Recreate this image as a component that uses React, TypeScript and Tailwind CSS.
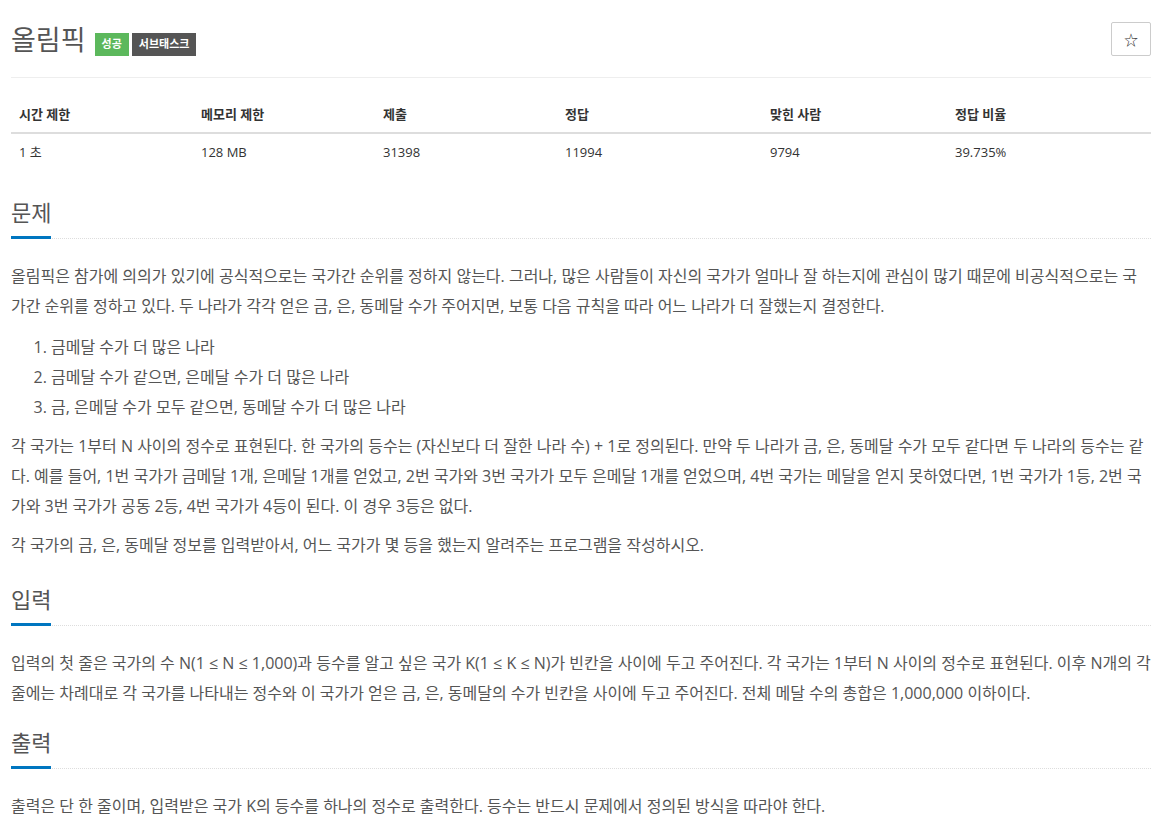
import React from 'react'

const FONT = { fontFamily: '"Open Sans", "Noto Sans CJK KR", sans-serif' }

const STATS = [
  { label: '시간 제한', value: '1 초', w: 'w-[182px]' },
  { label: '메모리 제한', value: '128 MB', w: 'w-[182px]' },
  { label: '제출', value: '31398', w: 'w-[182px]' },
  { label: '정답', value: '11994', w: 'w-[205px]' },
  { label: '맞힌 사람', value: '9794', w: 'w-[185px]' },
  { label: '정답 비율', value: '39.735%', w: 'w-[204px]' },
]

function Headline({ children, mt = 'mt-[23px]' }: { children: React.ReactNode; mt?: string }) {
  return (
    <div className={`${mt} border-b border-dotted border-[#ddd] relative`}>
      <h2 className="text-[22px] leading-[32px] text-[#555] pb-[10px]">{children}</h2>
      <span className="absolute left-0 bottom-[-1px] w-[40px] h-[3px] bg-[#0076c0]" />
    </div>
  )
}

function Text({ children }: { children: React.ReactNode }) {
  return <p className="mb-[9px]">{children}</p>
}

export default function App() {
  return (
    <div className="bg-white min-h-screen text-[#555]" style={FONT}>
      <div className="ml-[11px] w-[1140px]">
        {/* title */}
        <div className="flex items-center justify-between pt-[22px] pb-[19px] border-b border-[#eee]">
          <div className="flex items-center">
            <h1 className="text-[27px] leading-[36px] text-[#555]">올림픽</h1>
            <span className="ml-[9px] mt-[9px] h-[23px] px-[7px] flex items-center bg-[#5cb85c] text-white text-[11px] font-bold">성공</span>
            <span className="ml-[3px] mt-[9px] h-[23px] px-[7px] flex items-center bg-[#555] text-white text-[11px] font-bold">서브태스크</span>
          </div>
          <button className="w-[40px] h-[34px] mt-[-2px] border border-[#ccc] rounded-[2px] flex items-center justify-center text-[14px] text-[#333]">
            ☆
          </button>
        </div>

        {/* stats table */}
        <table className="mt-[18px] mb-[26px] w-full text-[13px] text-[#333] border-collapse">
          <thead>
            <tr className="border-b-2 border-[#ddd]">
              {STATS.map((s) => (
                <th key={s.label} className={`${s.w} text-left font-bold px-[8px] py-[8px] leading-[20px]`}>
                  {s.label}
                </th>
              ))}
            </tr>
          </thead>
          <tbody>
            <tr>
              {STATS.map((s) => (
                <td key={s.label} className="px-[8px] py-[8px] leading-[20px]">
                  {s.value}
                </td>
              ))}
            </tr>
          </tbody>
        </table>

        {/* 문제 */}
        <Headline>문제</Headline>
        <div className="mt-[22px] text-[16px] leading-[30px]">
          <Text>
            올림픽은 참가에 의의가 있기에 공식적으로는 국가간 순위를 정하지 않는다. 그러나, 많은 사람들이 자신의 국가가 얼마나 잘 하는지에 관심이 많기 때문에 비공식적으로는 국가간 순위를 정하고 있다. 두 나라가 각각 얻은 금, 은, 동메달 수가 주어지면, 보통 다음 규칙을 따라 어느 나라가 더 잘했는지 결정한다.
          </Text>
          <ol className="list-decimal pl-[40px] mt-[11px] mb-[9px]">
            <li>금메달 수가 더 많은 나라</li>
            <li>금메달 수가 같으면, 은메달 수가 더 많은 나라</li>
            <li>금, 은메달 수가 모두 같으면, 동메달 수가 더 많은 나라</li>
          </ol>
          <Text>
            각 국가는 1부터 N 사이의 정수로 표현된다. 한 국가의 등수는 (자신보다 더 잘한 나라 수) + 1로 정의된다. 만약 두 나라가 금, 은, 동메달 수가 모두 같다면 두 나라의 등수는 같다. 예를 들어, 1번 국가가 금메달 1개, 은메달 1개를 얻었고, 2번 국가와 3번 국가가 모두 은메달 1개를 얻었으며, 4번 국가는 메달을 얻지 못하였다면, 1번 국가가 1등, 2번 국가와 3번 국가가 공동 2등, 4번 국가가 4등이 된다. 이 경우 3등은 없다.
          </Text>
          <Text>각 국가의 금, 은, 동메달 정보를 입력받아서, 어느 국가가 몇 등을 했는지 알려주는 프로그램을 작성하시오.</Text>
        </div>

        {/* 입력 */}
        <Headline>입력</Headline>
        <div className="mt-[22px] text-[16px] leading-[30px]">
          <Text>
            입력의 첫 줄은 국가의 수 N(1 ≤ N ≤ 1,000)과 등수를 알고 싶은 국가 K(1 ≤ K ≤ N)가 빈칸을 사이에 두고 주어진다. 각 국가는 1부터 N 사이의 정수로 표현된다. 이후 N개의 각 줄에는 차례대로 각 국가를 나타내는 정수와 이 국가가 얻은 금, 은, 동메달의 수가 빈칸을 사이에 두고 주어진다. 전체 메달 수의 총합은 1,000,000 이하이다.
          </Text>
        </div>

        {/* 출력 */}
        <Headline mt="mt-[18px]">출력</Headline>
        <div className="mt-[22px] text-[16px] leading-[30px]">
          <Text>출력은 단 한 줄이며, 입력받은 국가 K의 등수를 하나의 정수로 출력한다. 등수는 반드시 문제에서 정의된 방식을 따라야 한다.</Text>
        </div>
      </div>
    </div>
  )
}
